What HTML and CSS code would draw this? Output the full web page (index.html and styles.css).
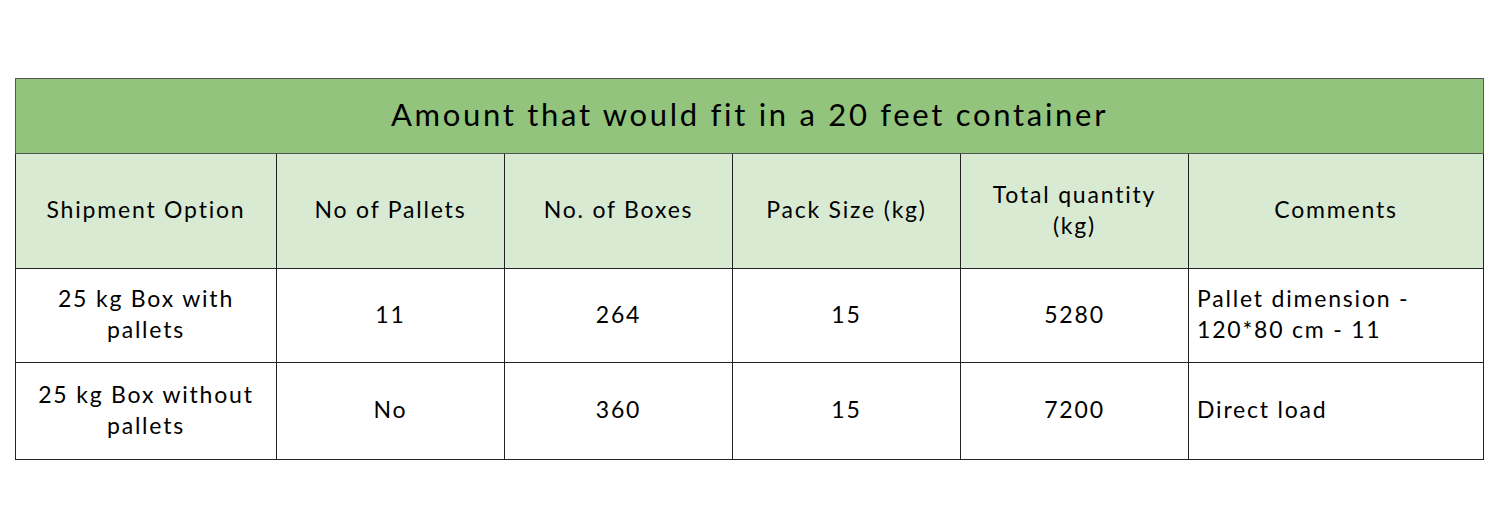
FILE: index.html
```html
<!DOCTYPE html>
<html>
<head>
<meta charset="utf-8">
<link rel="stylesheet" href="styles.css">
</head>
<body>
<div class="page">
  <table class="ship">
    <colgroup>
      <col class="c1"><col class="c2"><col class="c3"><col class="c4"><col class="c5"><col class="c6">
    </colgroup>
    <tr class="title-row">
      <th colspan="6" class="title">Amount that would fit in a 20 feet container</th>
    </tr>
    <tr class="head-row">
      <th>Shipment Option</th>
      <th>No of Pallets</th>
      <th>No. of Boxes</th>
      <th>Pack Size (kg)</th>
      <th>Total quantity<br>(kg)</th>
      <th>Comments</th>
    </tr>
    <tr class="row1">
      <td>25 kg Box with<br>pallets</td>
      <td>11</td>
      <td>264</td>
      <td>15</td>
      <td>5280</td>
      <td class="left">Pallet dimension -<br>120*80 cm - 11</td>
    </tr>
    <tr class="row2">
      <td>25 kg Box without<br>pallets</td>
      <td>No</td>
      <td>360</td>
      <td>15</td>
      <td>7200</td>
      <td class="left">Direct load</td>
    </tr>
  </table>
</div>
</body>
</html>
```
FILE: styles.css
```css
html, body {
  margin: 0;
  padding: 0;
  background: #ffffff;
}
.page {
  padding: 78px 0 0 15px;
}
.ship {
  border-collapse: collapse;
  table-layout: fixed;
  width: 1469px;
  font-family: "Lato", "Liberation Sans", sans-serif;
  color: #000;
  font-size: 23px;
  letter-spacing: 1.8px;
  line-height: 31px;
}
.c1 { width: 261px; }
.c2 { width: 228px; }
.c3 { width: 228px; }
.c4 { width: 228px; }
.c5 { width: 228px; }
.ship th, .ship td {
  border: 1px solid #222;
  text-align: center;
  vertical-align: middle;
  padding: 0 8px 3px;
  font-weight: normal;
}
.title-row th.title {
  background: #93c47d;
  height: 71px;
  font-size: 31px;
  letter-spacing: 2.7px;
  border-color: #555;
}
.head-row th {
  background: #d9ead3;
  height: 111px;
}
.row1 td { height: 90px; }
.row2 td { height: 93px; }
.ship td.left {
  text-align: left;
}
```
